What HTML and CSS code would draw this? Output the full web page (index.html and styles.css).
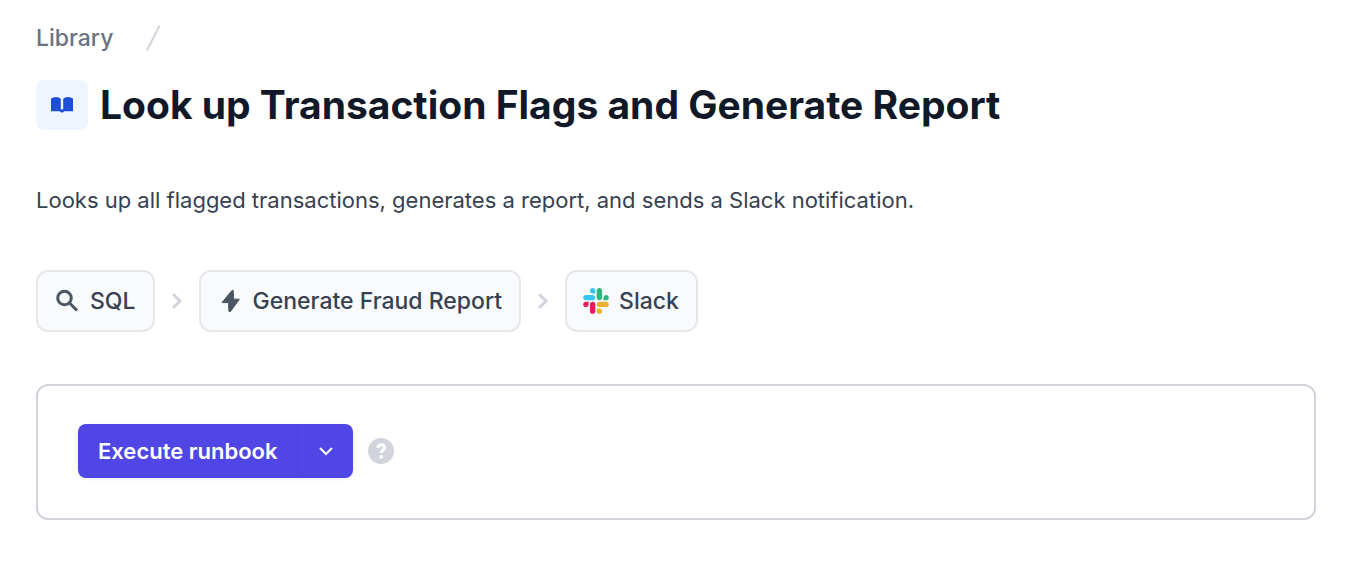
FILE: index.html
```html
<!DOCTYPE html>
<html lang="en">
<head>
    <meta charset="UTF-8">
    <meta name="viewport" content="width=device-width, initial-scale=1.0">
    <title>Look up Transaction Flags and Generate Report</title>
    <link rel="stylesheet" href="styles.css">
</head>
<body>
    <main class="page">
        <nav class="breadcrumb" aria-label="Breadcrumb">
            <a href="#">Library</a>
            <svg class="slash" viewBox="0 0 16 28" aria-hidden="true"><path d="M14.5 1.5L2 26.5"/></svg>
        </nav>

        <header class="title">
            <span class="title-icon">
                <svg viewBox="0 0 22 16" aria-hidden="true">
                    <path d="M0 1.6Q2.2 0 5 0Q8.2 0 9.8 1.8V12.6Q7.8 11.6 5 11.7Q2.4 11.8 0 13.6Z"/>
                    <path d="M22 1.6Q19.8 0 17 0Q13.8 0 12.2 1.8V12.6Q14.2 11.6 17 11.7Q19.6 11.8 22 13.6Z"/>
                    <path d="M0 12.5Q5 10.5 9.8 12.2H12.2Q17 10.5 22 12.5V14.2H13.2Q12.6 15.4 11 15.4Q9.4 15.4 8.8 14.2H0Z"/>
                </svg>
            </span>
            <h1>Look up Transaction Flags and Generate Report</h1>
        </header>

        <p class="description">Looks up all flagged transactions, generates a report, and sends a Slack notification.</p>

        <ol class="steps">
            <li class="step">
                <svg class="step-icon search" viewBox="0 0 26 26" aria-hidden="true"><circle cx="10.5" cy="10" r="6.8"/><path d="M15.3 14.8L23 22.5"/></svg>
                SQL
            </li>
            <li class="arrow" aria-hidden="true"><svg viewBox="0 0 12 16"><path d="M3 2L9 8L3 14"/></svg></li>
            <li class="step">
                <svg class="step-icon bolt" viewBox="0 0 26 26" aria-hidden="true"><path d="M15 2.4L5 14.6H11.4L12 23.6H13.4L22.4 11.2H16.6L16.2 2.4Z"/></svg>
                Generate Fraud Report
            </li>
            <li class="arrow" aria-hidden="true"><svg viewBox="0 0 12 16"><path d="M3 2L9 8L3 14"/></svg></li>
            <li class="step">
                <svg class="step-icon" viewBox="0 0 127 127" aria-hidden="true">
                    <path fill="#e01e5a" d="M27.2 80c0 7.3-5.9 13.2-13.2 13.2S.8 87.3.8 80s5.9-13.2 13.2-13.2h13.2zM33.8 80c0-7.3 5.9-13.2 13.2-13.2S60.2 72.7 60.2 80v33c0 7.3-5.9 13.2-13.2 13.2s-13.2-5.9-13.2-13.2z"/>
                    <path fill="#36c5f0" d="M47 27c-7.3 0-13.2-5.9-13.2-13.2S39.7.6 47 .6s13.2 5.9 13.2 13.2V27zM47 33.7c7.3 0 13.2 5.9 13.2 13.2S54.3 60.1 47 60.1H13.9C6.6 60.1.7 54.2.7 46.9s5.9-13.2 13.2-13.2z"/>
                    <path fill="#2eb67d" d="M99.9 46.9c0-7.3 5.9-13.2 13.2-13.2s13.2 5.9 13.2 13.2-5.9 13.2-13.2 13.2H99.9zM93.3 46.9c0 7.3-5.9 13.2-13.2 13.2s-13.2-5.9-13.2-13.2V13.8C66.9 6.5 72.8.6 80.1.6s13.2 5.9 13.2 13.2z"/>
                    <path fill="#ecb22e" d="M80.1 99.8c7.3 0 13.2 5.9 13.2 13.2s-5.9 13.2-13.2 13.2-13.2-5.9-13.2-13.2V99.8zM80.1 93.2c-7.3 0-13.2-5.9-13.2-13.2s5.9-13.2 13.2-13.2h33.1c7.3 0 13.2 5.9 13.2 13.2s-5.9 13.2-13.2 13.2z"/>
                </svg>
                Slack
            </li>
        </ol>

        <section class="panel">
            <div class="button-group">
                <button type="button" class="execute">Execute runbook</button>
                <button type="button" class="more" aria-label="More options">
                    <svg viewBox="0 0 16 10" aria-hidden="true"><path d="M2 2L8 8L14 2"/></svg>
                </button>
            </div>
            <button type="button" class="help" aria-label="Help">
                <svg viewBox="0 0 26 26" aria-hidden="true">
                    <circle cx="13" cy="13" r="13"/>
                    <path d="M9.8 9.8Q10 6.7 13.2 6.7Q16.5 6.7 16.5 9.6Q16.5 11.3 14.8 12.2Q13.2 13.1 13.2 15"/>
                    <circle class="dot" cx="13.2" cy="19" r="1.9"/>
                </svg>
            </button>
        </section>
    </main>
</body>
</html>
```

FILE: styles.css
```css
* {
    box-sizing: border-box;
}
body {
    margin: 0;
    background-color: #ffffff;
    color: #374151;
    font-family: Inter, "Liberation Sans", sans-serif;
    font-size: 23px;
    line-height: 32px;
}
svg {
    display: block;
    flex: none;
}
button {
    border: none;
    padding: 0;
    font: inherit;
    cursor: pointer;
}
.page {
    padding: 22px 40px 40px 36px;
}
.breadcrumb {
    display: flex;
    align-items: center;
    gap: 32px;
}
.breadcrumb a {
    color: #6b7280;
    font-weight: 500;
    text-decoration: none;
}
.slash {
    width: 16px;
    height: 28px;
    fill: none;
    stroke: #d1d5db;
    stroke-width: 2;
}
.title {
    display: flex;
    align-items: center;
    gap: 12px;
    margin-top: 26px;
}
.title-icon {
    display: flex;
    align-items: center;
    justify-content: center;
    width: 52px;
    height: 50px;
    border-radius: 8px;
    background-color: #eff6ff;
}
.title-icon svg {
    width: 22px;
    height: 16px;
    fill: #1d4ed8;
}
h1 {
    margin: 0;
    color: #111827;
    font-size: 39px;
    font-weight: 700;
    line-height: 48px;
}
.description {
    margin: 54px 0 0;
    font-size: 22px;
}
.steps {
    display: flex;
    align-items: center;
    gap: 16px;
    margin: 54px 0 0;
    padding: 0;
    list-style: none;
}
.step {
    display: flex;
    align-items: center;
    gap: 10px;
    height: 62px;
    padding: 0 17px 0 16px;
    border: 2px solid #e5e7eb;
    border-radius: 12px;
    background-color: #f9fafb;
    font-weight: 500;
}
.step-icon {
    width: 26px;
    height: 26px;
}
.search {
    fill: none;
    stroke: #4b5563;
    stroke-width: 3;
}
.bolt {
    fill: #4b5563;
    stroke: #4b5563;
    stroke-linejoin: round;
}
.arrow svg {
    width: 12px;
    height: 16px;
    fill: none;
    stroke: #d1d5db;
    stroke-width: 3;
    stroke-linecap: round;
}
.panel {
    display: flex;
    align-items: center;
    gap: 15px;
    margin-top: 52px;
    padding: 38px 40px 40px;
    border: 2px solid #d1d5db;
    border-radius: 12px;
}
.button-group {
    display: flex;
    height: 54px;
    border-radius: 8px;
    background-color: #4f46e5;
    box-shadow: 0 1px 3px rgba(0, 0, 0, 0.1);
}
.execute,
.more {
    background-color: transparent;
    color: #ffffff;
}
.execute {
    padding: 0 20px;
    font-size: 22px;
    font-weight: 600;
}
.more {
    display: flex;
    align-items: center;
    justify-content: center;
    width: 56px;
    border-left: 1px solid #4b42e0;
}
.more svg {
    width: 16px;
    height: 10px;
    fill: none;
    stroke: #ffffff;
    stroke-width: 2;
}
.help {
    background-color: transparent;
}
.help svg {
    width: 26px;
    height: 26px;
    fill: #d1d5db;
}
.help path {
    fill: none;
    stroke: #ffffff;
    stroke-width: 3;
}
.help .dot {
    fill: #ffffff;
}
```
